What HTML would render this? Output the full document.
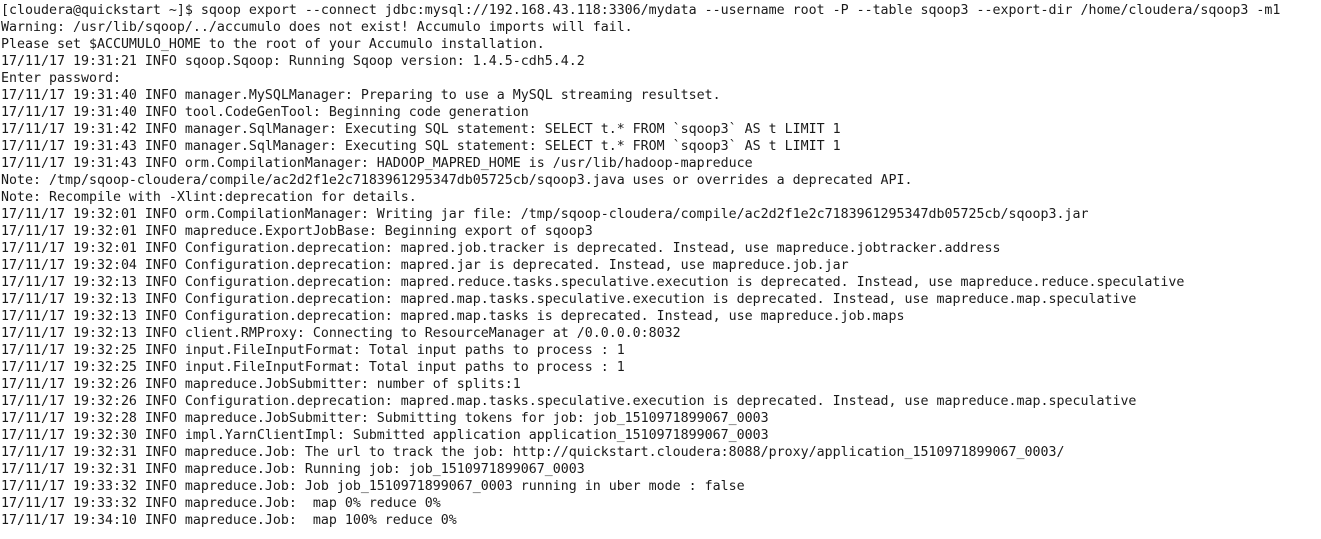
<!DOCTYPE html>
<html><head><meta charset="utf-8"><style>
html,body{margin:0;padding:0;background:#fff;width:1321px;height:539px;overflow:hidden}
pre{margin:0;padding:2px 0 0 1px;font-family:"DejaVu Sans Mono","Liberation Mono",monospace;font-size:13.29px;line-height:17px;color:#1a1a1a;white-space:pre}
</style></head><body><pre>[cloudera@quickstart ~]$ sqoop export --connect jdbc:mysql://192.168.43.118:3306/mydata --username root -P --table sqoop3 --export-dir /home/cloudera/sqoop3 -m1
Warning: /usr/lib/sqoop/../accumulo does not exist! Accumulo imports will fail.
Please set $ACCUMULO_HOME to the root of your Accumulo installation.
17/11/17 19:31:21 INFO sqoop.Sqoop: Running Sqoop version: 1.4.5-cdh5.4.2
Enter password:
17/11/17 19:31:40 INFO manager.MySQLManager: Preparing to use a MySQL streaming resultset.
17/11/17 19:31:40 INFO tool.CodeGenTool: Beginning code generation
17/11/17 19:31:42 INFO manager.SqlManager: Executing SQL statement: SELECT t.* FROM `sqoop3` AS t LIMIT 1
17/11/17 19:31:43 INFO manager.SqlManager: Executing SQL statement: SELECT t.* FROM `sqoop3` AS t LIMIT 1
17/11/17 19:31:43 INFO orm.CompilationManager: HADOOP_MAPRED_HOME is /usr/lib/hadoop-mapreduce
Note: /tmp/sqoop-cloudera/compile/ac2d2f1e2c7183961295347db05725cb/sqoop3.java uses or overrides a deprecated API.
Note: Recompile with -Xlint:deprecation for details.
17/11/17 19:32:01 INFO orm.CompilationManager: Writing jar file: /tmp/sqoop-cloudera/compile/ac2d2f1e2c7183961295347db05725cb/sqoop3.jar
17/11/17 19:32:01 INFO mapreduce.ExportJobBase: Beginning export of sqoop3
17/11/17 19:32:01 INFO Configuration.deprecation: mapred.job.tracker is deprecated. Instead, use mapreduce.jobtracker.address
17/11/17 19:32:04 INFO Configuration.deprecation: mapred.jar is deprecated. Instead, use mapreduce.job.jar
17/11/17 19:32:13 INFO Configuration.deprecation: mapred.reduce.tasks.speculative.execution is deprecated. Instead, use mapreduce.reduce.speculative
17/11/17 19:32:13 INFO Configuration.deprecation: mapred.map.tasks.speculative.execution is deprecated. Instead, use mapreduce.map.speculative
17/11/17 19:32:13 INFO Configuration.deprecation: mapred.map.tasks is deprecated. Instead, use mapreduce.job.maps
17/11/17 19:32:13 INFO client.RMProxy: Connecting to ResourceManager at /0.0.0.0:8032
17/11/17 19:32:25 INFO input.FileInputFormat: Total input paths to process : 1
17/11/17 19:32:25 INFO input.FileInputFormat: Total input paths to process : 1
17/11/17 19:32:26 INFO mapreduce.JobSubmitter: number of splits:1
17/11/17 19:32:26 INFO Configuration.deprecation: mapred.map.tasks.speculative.execution is deprecated. Instead, use mapreduce.map.speculative
17/11/17 19:32:28 INFO mapreduce.JobSubmitter: Submitting tokens for job: job_1510971899067_0003
17/11/17 19:32:30 INFO impl.YarnClientImpl: Submitted application application_1510971899067_0003
17/11/17 19:32:31 INFO mapreduce.Job: The url to track the job: http://quickstart.cloudera:8088/proxy/application_1510971899067_0003/
17/11/17 19:32:31 INFO mapreduce.Job: Running job: job_1510971899067_0003
17/11/17 19:33:32 INFO mapreduce.Job: Job job_1510971899067_0003 running in uber mode : false
17/11/17 19:33:32 INFO mapreduce.Job:  map 0% reduce 0%
17/11/17 19:34:10 INFO mapreduce.Job:  map 100% reduce 0%</pre></body></html>
